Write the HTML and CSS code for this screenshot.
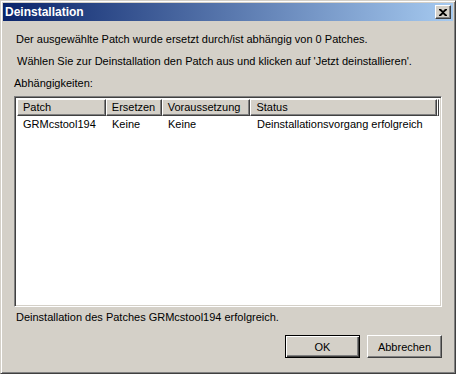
FILE: index.html
```html
<!DOCTYPE html>
<html lang="de">
	<head>
		<meta charset="UTF-8" />
		<title>Deinstallation</title>
		<link rel="stylesheet" href="styles.css">
	</head>
	<body>
		<div class="window">
			<div class="titlebar">
				<span class="title">Deinstallation</span>
				<button class="close-btn" title="Schließen">
					<svg width="8" height="7" viewBox="0 0 8 7">
						<path d="M0 0h2l2 2 2-2h2v1l-3 2.5 3 2.5v1h-2l-2-2-2 2h-2v-1l3-2.5-3-2.5z" fill="#000" />
					</svg>
				</button>
			</div>

			<div class="dialog-body">
				<p class="info">Der ausgewählte Patch wurde ersetzt durch/ist abhängig von 0 Patches.</p>
				<p class="info second">Wählen Sie zur Deinstallation den Patch aus und klicken auf 'Jetzt deinstallieren'.</p>
				<div class="label">Abhängigkeiten:</div>

				<div class="list-view">
					<div class="list-header">
						<div class="col col-patch">Patch</div>
						<div class="col col-replace">Ersetzen</div>
						<div class="col col-req">Voraussetzung</div>
						<div class="col col-status">Status</div>
						<div class="col col-rest"></div>
					</div>
					<div class="list-row">
						<div class="cell col-patch">GRMcstool194</div>
						<div class="cell col-replace">Keine</div>
						<div class="cell col-req">Keine</div>
						<div class="cell col-status">Deinstallationsvorgang erfolgreich</div>
					</div>
				</div>

				<div class="status-line">Deinstallation des Patches GRMcstool194 erfolgreich.</div>

				<div class="button-row">
					<button class="win-btn default">OK</button>
					<button class="win-btn">Abbrechen</button>
				</div>
			</div>
		</div>
	</body>
</html>
```

FILE: styles.css
```css
:root {
	--face: #d4d0c8;
	--light: #ffffff;
	--shadow: #808080;
	--dark: #404040;
	--title-start: #0a246a;
	--title-end: #a6caf0;
}
body {
	margin: 0;
	background: var(--face);
	font-family: "Liberation Sans", Arial, sans-serif;
	font-size: 11px;
	color: #000;
}
.window {
	width: 456px;
	height: 374px;
	box-sizing: border-box;
	border: 1px solid;
	border-color: var(--face) var(--dark) var(--dark) var(--face);
	box-shadow: inset 1px 1px var(--light), inset -1px -1px var(--shadow);
	padding: 2px;
	background: var(--face);
	display: flex;
	flex-direction: column;
}
.titlebar {
	height: 18px;
	background: linear-gradient(to right, var(--title-start), var(--title-end));
	display: flex;
	align-items: center;
	justify-content: space-between;
	padding: 0 2px 0 2px;
}
.title {
	color: #fff;
	font-weight: bold;
	font-size: 12px;
}
.close-btn {
	width: 16px;
	height: 14px;
	padding: 0;
	margin: 0;
	background: var(--face);
	border: 1px solid;
	border-color: var(--light) var(--dark) var(--dark) var(--light);
	box-shadow: inset -1px -1px var(--shadow);
	display: flex;
	align-items: center;
	justify-content: center;
}
.dialog-body {
	flex-grow: 1;
	display: flex;
	flex-direction: column;
	padding: 0 11px 0 11px;
}
.info {
	margin: 12px 0 0 2px;
	line-height: 13px;
}
.info.second {
	margin-top: 9px;
	margin-left: 3px;
}
.label {
	margin-top: 9px;
	line-height: 13px;
}
.list-view {
	margin-top: 6px;
	height: 211px;
	background: #fff;
	border: 1px solid;
	border-color: var(--shadow) var(--light) var(--light) var(--shadow);
	box-shadow: inset 1px 1px var(--dark), inset -1px -1px var(--face);
	padding: 2px;
	box-sizing: border-box;
}
.list-header {
	display: flex;
	height: 17px;
}
.list-header .col {
	box-sizing: border-box;
	height: 17px;
	line-height: 14px;
	padding-left: 5px;
	background: var(--face);
	border: 1px solid;
	border-color: var(--light) var(--dark) var(--dark) var(--light);
	box-shadow: inset -1px -1px var(--shadow);
	white-space: nowrap;
	overflow: hidden;
}
.col-patch { width: 89px; }
.col-replace { width: 56px; }
.col-req { width: 89px; }
.col-status { width: 187px; }
.list-header .col-rest {
	flex-grow: 1;
	padding: 0;
}
.list-row {
	display: flex;
	height: 14px;
	line-height: 14px;
	margin-top: 1px;
}
.list-row .cell {
	box-sizing: border-box;
	padding-left: 6px;
	white-space: nowrap;
}
.status-line {
	margin-top: 4px;
	margin-left: 2px;
	line-height: 13px;
}
.button-row {
	margin-top: 11px;
	display: flex;
	justify-content: flex-end;
	gap: 7px;
}
.win-btn {
	width: 75px;
	height: 23px;
	padding: 0;
	font-family: "Liberation Sans", Arial, sans-serif;
	font-size: 11px;
	color: #000;
	background: var(--face);
	border: 1px solid;
	border-color: var(--light) var(--dark) var(--dark) var(--light);
	box-shadow: inset -1px -1px var(--shadow);
}
.win-btn.default {
	border-color: #000;
	box-shadow: inset 1px 1px var(--light), inset -1px -1px var(--dark), inset -2px -2px var(--shadow);
}
```
